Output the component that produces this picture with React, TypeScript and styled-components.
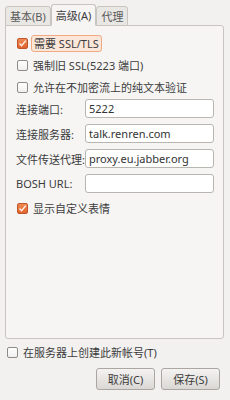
import { Fragment } from 'react';
import styled, { createGlobalStyle } from 'styled-components';

const GlobalStyle = createGlobalStyle`
  html, body {
    margin: 0;
    padding: 0;
    background: #f2f1f0;
  }
  body {
    font-family: 'Noto Sans', 'Noto Sans CJK SC', sans-serif;
    font-size: 11px;
    color: #3c3c3c;
  }
`;

const Window = styled.div`
  width: 230px;
  height: 400px;
  box-sizing: border-box;
  padding-top: 4px;
  background: #f2f1f0;
  display: flex;
  flex-direction: column;
`;

const TabBar = styled.div`
  display: flex;
  align-items: flex-end;
  height: 22px;
  padding-left: 5px;
  margin-bottom: -1px;
`;

const Tab = styled.div<{ $active?: boolean }>`
  position: relative;
  z-index: ${(p) => (p.$active ? 2 : 1)};
  box-sizing: border-box;
  height: ${(p) => (p.$active ? '22px' : '20px')};
  padding: 0 4px;
  display: flex;
  align-items: center;
  justify-content: center;
  border: 1px solid #c8c5c0;
  border-bottom: 1px solid ${(p) => (p.$active ? '#f6f5f4' : '#c8c5c0')};
  border-radius: 3px 3px 0 0;
  background: ${(p) => (p.$active ? '#f6f5f4' : '#e9e7e4')};
  color: ${(p) => (p.$active ? '#3c3c3c' : '#5a5a5a')};
  white-space: nowrap;
`;

const Panel = styled.div`
  box-sizing: border-box;
  margin: 0 6px 0 5px;
  height: 314px;
  border: 1px solid #c8c5c0;
  border-radius: 0 3px 3px 3px;
  background: #f6f5f4;
  padding: 6px 9px 0 10px;
  display: flex;
  flex-direction: column;
`;

const CheckRow = styled.label`
  display: flex;
  align-items: center;
  height: 22px;
  padding-left: 1px;
`;

const Box = styled.span<{ $checked?: boolean }>`
  box-sizing: border-box;
  width: 11px;
  height: 11px;
  flex: none;
  border-radius: 2px;
  border: 1px solid ${(p) => (p.$checked ? '#c0552a' : '#8f8c87')};
  background: ${(p) =>
    p.$checked
      ? 'linear-gradient(#f08a55, #e0642c)'
      : 'linear-gradient(#ffffff, #f0efee)'};
  display: flex;
  align-items: center;
  justify-content: center;
`;

const CheckText = styled.span<{ $focus?: boolean }>`
  margin-left: ${(p) => (p.$focus ? '3px' : '5px')};
  padding: ${(p) => (p.$focus ? '1px 2px' : '0')};
  height: ${(p) => (p.$focus ? '17px' : 'auto')};
  box-sizing: border-box;
  display: flex;
  align-items: center;
  border: ${(p) => (p.$focus ? '1px solid #f2a982' : 'none')};
  border-radius: 3px;
  background: ${(p) => (p.$focus ? '#fbe6da' : 'transparent')};
  white-space: nowrap;
`;

const Form = styled.div`
  display: grid;
  grid-template-columns: 69px 1fr;
  grid-auto-rows: 19px;
  row-gap: 6px;
  margin-top: 1px;
  align-items: center;
`;

const FieldLabel = styled.span`
  white-space: nowrap;
`;

const Input = styled.div`
  box-sizing: border-box;
  height: 19px;
  border: 1px solid #b9b6b1;
  border-radius: 3px;
  background: #ffffff;
  padding: 0 3px;
  display: flex;
  align-items: center;
  color: #333;
`;

const LastCheck = styled(CheckRow)`
  margin-top: 4px;
`;

const Footer = styled.div`
  display: flex;
  flex-direction: column;
  padding: 4px 10px 0 7px;
`;

const FooterCheck = styled.label`
  display: flex;
  align-items: center;
  height: 18px;
`;

const Buttons = styled.div`
  display: flex;
  justify-content: flex-end;
  gap: 6px;
  margin-top: 7px;
`;

const Button = styled.button`
  box-sizing: border-box;
  width: 59px;
  height: 22px;
  border: 1px solid #aaa7a2;
  border-radius: 3px;
  background: linear-gradient(#f4f3f2, #dad8d4);
  font-family: inherit;
  font-size: 11px;
  color: #3c3c3c;
  padding: 0;
`;

function Check({ checked }: { checked?: boolean }) {
  return (
    <Box $checked={checked}>
      {checked && (
        <svg width="9" height="9" viewBox="0 0 9 9">
          <path d="M1.5 4.5 L3.6 6.8 L7.8 1.6" fill="none" stroke="#fff3ea" strokeWidth="1.4" />
        </svg>
      )}
    </Box>
  );
}

const fields = [
  { label: '连接端口:', value: '5222' },
  { label: '连接服务器:', value: 'talk.renren.com' },
  { label: '文件传送代理:', value: 'proxy.eu.jabber.org' },
  { label: 'BOSH URL:', value: '' }
];

export default function App() {
  return (
    <>
      <GlobalStyle />
      <Window>
        <TabBar>
          <Tab>基本(B)</Tab>
          <Tab $active>高级(A)</Tab>
          <Tab>代理</Tab>
        </TabBar>
        <Panel>
          <CheckRow>
            <Check checked />
            <CheckText $focus>需要 SSL/TLS</CheckText>
          </CheckRow>
          <CheckRow>
            <Check />
            <CheckText>强制旧 SSL(5223 端口)</CheckText>
          </CheckRow>
          <CheckRow>
            <Check />
            <CheckText>允许在不加密流上的纯文本验证</CheckText>
          </CheckRow>
          <Form>
            {fields.map(({ label, value }) => (
              <Fragment key={label}>
                <FieldLabel>{label}</FieldLabel>
                <Input>{value}</Input>
              </Fragment>
            ))}
          </Form>
          <LastCheck>
            <Check checked />
            <CheckText>显示自定义表情</CheckText>
          </LastCheck>
        </Panel>
        <Footer>
          <FooterCheck>
            <Check />
            <CheckText>在服务器上创建此新帐号(T)</CheckText>
          </FooterCheck>
          <Buttons>
            <Button>取消(C)</Button>
            <Button>保存(S)</Button>
          </Buttons>
        </Footer>
      </Window>
    </>
  );
}
